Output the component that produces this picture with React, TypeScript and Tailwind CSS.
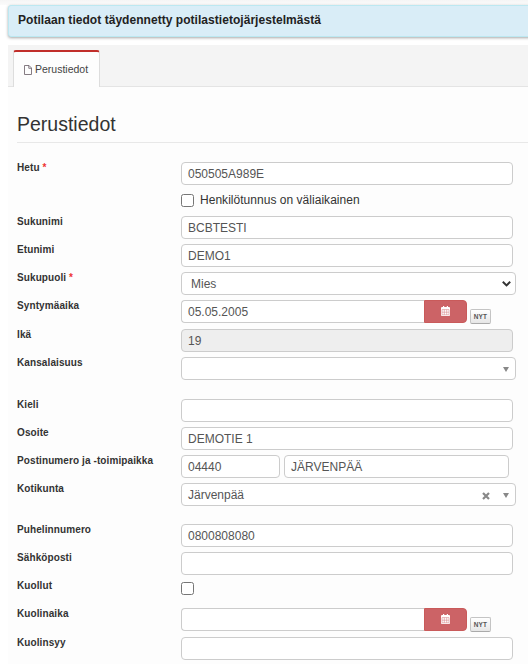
import React from 'react';

function Label({ text, required }: { text: string; required?: boolean }) {
  return (
    <div className="w-[164px] shrink-0 whitespace-nowrap text-[10px] font-bold leading-3 tracking-[0.1px] text-[#333]">
      {text}
      {required && <span className="text-[#e33]"> *</span>}
    </div>
  );
}

function Row({ label, required, height, children }: {
  label: string;
  required?: boolean;
  height: string;
  children: React.ReactNode;
}) {
  return (
    <div className={`flex shrink-0 items-start ${height}`}>
      <Label text={label} required={required} />
      <div>{children}</div>
    </div>
  );
}

function Field({ value = '', className = 'w-[332px] rounded' }: { value?: string; className?: string }) {
  return (
    <div className={`flex h-[23px] items-center border border-[#ccc] bg-white pl-[6px] text-[12px] leading-none text-[#555] ${className}`}>
      {value}
    </div>
  );
}

function Caret() {
  return (
    <svg className="mt-[2px] h-[5px] w-[6px]" viewBox="0 0 6 5" fill="#888">
      <path d="M0 0h6L3 5z" />
    </svg>
  );
}

function Check() {
  return <span className="block h-[13px] w-[13px] shrink-0 rounded-[2.5px] border border-[#767676] bg-white" />;
}

function DateField({ value }: { value?: string }) {
  return (
    <div className="flex">
      <Field value={value} className="w-[243px] rounded-l border-r-0" />
      <div className="flex h-[23px] w-[43px] items-start justify-center rounded-r border border-[#c95a5a] bg-[#cc6366] pt-[5px]">
        <svg className="h-[10px] w-[9px]" viewBox="0 0 9 10">
          <path fill="#fff" d="M1 1h1V0h1.2v1h2.6V0H7v1h1q1 0 1 1v7q0 1-1 1H1q-1 0-1-1V2q0-1 1-1z" />
          <path stroke="#cc6366" strokeWidth=".6" d="M1 3.6h7M1 6.2h7M1 8.8h7M1 3.6v5.2M3.3 3.6v5.2M5.7 3.6v5.2M8 3.6v5.2" opacity=".75" />
        </svg>
      </div>
      <div className="ml-[3px] mt-[9px] flex h-[15px] w-[21px] items-center justify-center rounded-[2px] border border-[#c4c4c4] border-b-[#aaa] bg-linear-to-b from-white to-[#e6e6e6] text-[6.5px] font-bold tracking-[0.2px] text-[#555]">
        NYT
      </div>
    </div>
  );
}

export default function App() {
  return (
    <div className="flex h-[664px] w-[528px] flex-col overflow-hidden bg-white pl-2 font-['Liberation_Sans',Arial,sans-serif]">
      <div className="-ml-2 h-[5px] shrink-0 bg-linear-to-b from-[#f5f5f5] to-[#fbfbfb]" />
      <div className="-mr-1 flex h-8 shrink-0 items-center rounded-[3px] border border-[#bce8f1] bg-[#d9edf7] pb-[2px] pl-[9px] text-[12px] font-bold tracking-[0.04px] text-[#222] shadow-[0_1px_3px_rgba(0,0,0,0.35)]">
        <span className="whitespace-nowrap">Potilaan tiedot täydennetty potilastietojärjestelmästä</span>
      </div>
      <div className="mt-2 flex h-[42px] shrink-0 border-b border-[#e4e4e4] bg-[#f4f4f4] pl-[5px] pt-[5px]">
        <div className="flex h-[37px] w-[87px] items-center rounded-t-[3px] border-x border-t-2 border-x-[#ddd] border-t-[#c12e2a] bg-[#fdfdfd] pl-[10px] text-[10.5px] text-[#444]">
          <svg className="mr-[3px] h-[10px] w-2" viewBox="0 0 8 10" fill="none" stroke="#776d75" strokeWidth=".9">
            <path d="M.5.5H5L7.5 3v6.5h-7zM4.8.5v2.8h2.7" />
          </svg>
          <span>Perustiedot</span>
        </div>
      </div>
      <div className="flex flex-1 flex-col bg-[#fdfdfd] pl-[9px]">
        <h1 className="flex h-14 shrink-0 items-end border-b border-[#e8e8e8] pb-[6px] text-[19.5px] leading-6 text-[#333]">Perustiedot</h1>
        <div className="h-[19px] shrink-0" />
        <Row label="Hetu" required height="h-[54px]">
          <Field value="050505A989E" />
          <div className="mt-[8px] flex items-center text-[12px] leading-[14px] tracking-[0.03px] text-[#333]">
            <Check />
            <span className="ml-[6px]">Henkilötunnus on väliaikainen</span>
          </div>
        </Row>
        <Row label="Sukunimi" height="h-7"><Field value="BCBTESTI" /></Row>
        <Row label="Etunimi" height="h-7"><Field value="DEMO1" /></Row>
        <Row label="Sukupuoli" required height="h-7">
          <div className="flex h-[23px] w-[335px] items-center justify-between rounded border border-[#ccc] bg-white pl-[9px] pr-[4px] text-[12px] text-[#555]">
            <span>Mies</span>
            <svg className="h-[6px] w-[9px]" viewBox="0 0 9 6" fill="none" stroke="#333" strokeWidth="2">
              <path d="M.8.8 4.5 4.4 8.2.8" />
            </svg>
          </div>
        </Row>
        <Row label="Syntymäaika" height="h-[29px]"><DateField value="05.05.2005" /></Row>
        <Row label="Ikä" height="h-7"><Field value="19" className="w-[332px] rounded bg-[#eee]!" /></Row>
        <Row label="Kansalaisuus" height="h-[42px]">
          <div className="flex h-[23px] w-[335px] items-center justify-end rounded border border-[#ccc] bg-white pr-[6px]"><Caret /></div>
        </Row>
        <Row label="Kieli" height="h-7"><Field /></Row>
        <Row label="Osoite" height="h-7"><Field value="DEMOTIE 1" /></Row>
        <Row label="Postinumero ja -toimipaikka" height="h-7">
          <div className="flex gap-1">
            <Field value="04440" className="w-[99px] rounded" />
            <Field value="JÄRVENPÄÄ" className="w-[225px] rounded" />
          </div>
        </Row>
        <Row label="Kotikunta" height="h-[41px]">
          <div className="flex h-[23px] w-[335px] items-center rounded border border-[#ccc] bg-white pl-[6px] pr-[6px] text-[12px] leading-none text-[#555]">
            <span className="flex-1">Järvenpää</span>
            <svg className="mr-[13px] mt-[2px] h-2 w-2" viewBox="0 0 8 8" stroke="#888" strokeWidth="2.2">
              <path d="m1 1 6 6M7 1 1 7" />
            </svg>
            <Caret />
          </div>
        </Row>
        <Row label="Puhelinnumero" height="h-7"><Field value="0800808080" /></Row>
        <Row label="Sähköposti" height="h-7"><Field /></Row>
        <Row label="Kuollut" height="h-7"><div className="pt-[2px]"><Check /></div></Row>
        <Row label="Kuolinaika" height="h-[29px]"><DateField /></Row>
        <Row label="Kuolinsyy" height="h-[27px]"><Field /></Row>
      </div>
    </div>
  );
}
